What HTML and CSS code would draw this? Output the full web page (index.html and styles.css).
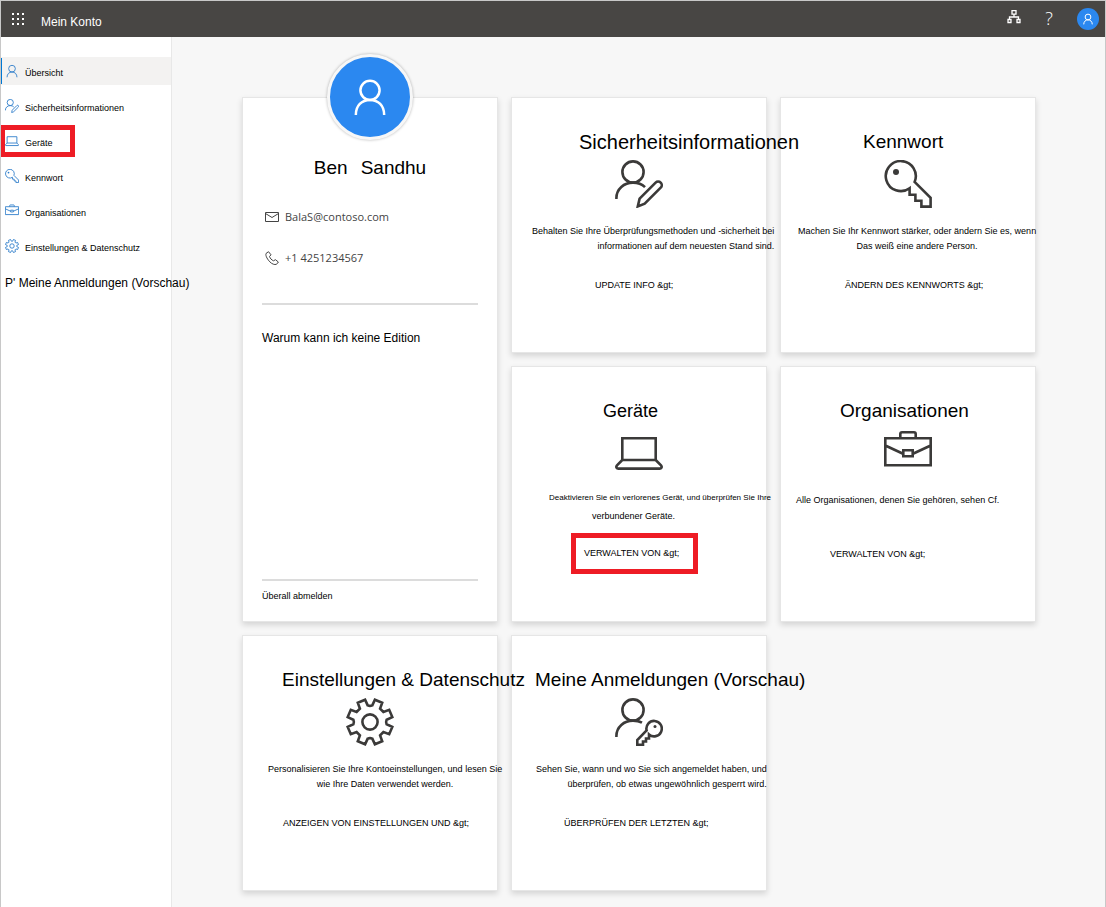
FILE: index.html
```html
<!DOCTYPE html>
<html lang="de">
<head>
<meta charset="utf-8">
<meta name="viewport" content="width=device-width, initial-scale=1">
<title>Mein Konto</title>
<link rel="stylesheet" href="styles.css">
</head>
<body class="page">
<svg class="sprite" aria-hidden="true">
  <symbol id="person" viewBox="0 0 48 48"><circle cx="24" cy="16" r="11.500"/><path d="M7 45.500c0-11 7-18 17-18s17 7 17 18"/></symbol>
  <symbol id="person-edit" viewBox="0 0 48 48"><circle cx="18" cy="12" r="10.6"/><path d="M1.4 39v-1C1.4 29 9 22.6 18 22.6c5 0 9 1.600 12 4.600M22.800 46.400l1.800-7.800 16-16a3.600 3.600 0 0 1 5.100 5.100l-16 16z"/></symbol>
  <symbol id="key" viewBox="0 0 48 48"><path d="M30.600 21.900l16 16v8.700h-9.200v-5.800h-6v-6h-5.800v-6.600A15 15 0 1 1 30.600 21.900z"/><circle class="dot" cx="12" cy="12" r="3"/></symbol>
  <symbol id="laptop" viewBox="0 0 48 48"><path d="M7.300 31V9.300h33.400V31zL2 36.300c-1.400 1.700-.4 3.300 1.400 3.300h41.200c1.800 0 2.800-1.600 1.400-3.300L40.700 31"/></symbol>
  <symbol id="briefcase" viewBox="0 0 48 48"><path d="M1.300 9.300h45.400v27H1.300zM16.300 9V5q0-1.700 1.700-1.700h12q1.700 0 1.700 1.700v4M1.300 16.500L18.500 24.500M46.700 16.500L29.500 24.500M19.300 21.300h9.400v6h-9.400z"/></symbol>
  <symbol id="gear" viewBox="0 0 48 48"><path d="M26.300 7.400L28.900 1.700 36.200 4.800 34.100 10.600 37.400 13.900 43.200 11.800 46.300 19.100 40.600 21.700Q39.600 24 40.600 26.300L46.300 28.900 43.200 36.200 37.400 34.100 34.100 37.400 36.200 43.200 28.900 46.300 26.300 40.600Q24 39.600 21.700 40.600L19.100 46.300 11.800 43.200 13.900 37.400 10.600 34.100 4.800 36.200 1.700 28.900 7.400 26.300Q8.400 24 7.400 21.700L1.700 19.100 4.800 11.800 10.600 13.900 13.900 10.600 11.800 4.800 19.100 1.700 21.700 7.400Q24 8.400 26.300 7.400z"/><circle cx="24" cy="24" r="7.600"/></symbol>
  <symbol id="person-key" viewBox="0 0 48 48"><circle cx="18" cy="12" r="10.6"/><path d="M1.400 39v-1C1.400 29 9 22.600 18 22.600c3.600 0 6.500.7 9 2.100M31.600 32.400l-9.300 9.700v4.600H28v-3.200h3v-3h3v-4.100a7.700 7.700 0 1 0-2.400-4z"/><circle class="dot" cx="40" cy="28.500" r="1.500"/></symbol>
  <symbol id="mail" viewBox="0 0 14 14"><path d="M.5 2.500h13v9H.5zM.5 3.500L7 7.500l6.500-4"/></symbol>
  <symbol id="phone" viewBox="0 0 14 14"><path d="M3.500.7L1 2.500C.2 5 3 9 5 11s4.500 3 6.500 2.300L13.400 11l-3-2.300-1.900 1.100C6.500 9 5.200 7.400 4.500 5.500L6 3.800z"/></symbol>
  <symbol id="org" viewBox="0 0 14 14"><path d="M5 .7h4v3.500H5zM1 9.500h3v3H1zM10 9.500h3v3h-3zM7 4v3M2.500 9.500V7h9v2.500"/></symbol>
  <symbol id="waffle" viewBox="0 0 12 12"><path d="M0 1h2M5 1h2M10 1h2M0 6h2M5 6h2M10 6h2M0 11h2M5 11h2M10 11h2"/></symbol>
</svg>

<header class="topbar">
  <button class="topbar-button" aria-label="App-Startfeld"><svg class="icon-waffle"><use href="#waffle"/></svg></button>
  <span class="brand">Mein Konto</span>
  <div class="topbar-actions">
    <button class="topbar-button" aria-label="Organisation"><svg class="icon-org"><use href="#org"/></svg></button>
    <button class="topbar-button help" aria-label="Hilfe">?</button>
    <button class="topbar-button account" aria-label="Konto"><svg class="icon-account"><use href="#person"/></svg></button>
  </div>
</header>

<div class="layout">
  <nav class="sidebar">
    <a class="nav-item active" href="#"><svg class="icon-nav"><use href="#person"/></svg><span class="nav-label">Übersicht</span></a>
    <a class="nav-item" href="#"><svg class="icon-nav"><use href="#person-edit"/></svg><span class="nav-label">Sicherheitsinformationen</span></a>
    <a class="nav-item marked" href="#"><svg class="icon-nav"><use href="#laptop"/></svg><span class="nav-label">Geräte</span></a>
    <a class="nav-item" href="#"><svg class="icon-nav"><use href="#key"/></svg><span class="nav-label">Kennwort</span></a>
    <a class="nav-item" href="#"><svg class="icon-nav"><use href="#briefcase"/></svg><span class="nav-label">Organisationen</span></a>
    <a class="nav-item" href="#"><svg class="icon-nav"><use href="#gear"/></svg><span class="nav-label">Einstellungen &amp; Datenschutz</span></a>
    <a class="nav-item large" href="#"><span class="nav-label">P' Meine Anmeldungen (Vorschau)</span></a>
  </nav>

  <main class="cards">
    <section class="card profile">
      <div class="avatar"><svg class="icon-avatar"><use href="#person"/></svg></div>
      <h1 class="name"><span>Ben</span><span>Sandhu</span></h1>
      <p class="contact"><svg class="icon-small"><use href="#mail"/></svg>BalaS@contoso.com</p>
      <p class="contact"><svg class="icon-small"><use href="#phone"/></svg>+1 4251234567</p>
      <div class="profile-note"><a class="link" href="#">Warum kann ich keine Edition</a></div>
      <div class="profile-footer"><a class="link" href="#">Überall abmelden</a></div>
    </section>

    <section class="card security">
      <h2 class="title">Sicherheitsinformationen</h2>
      <svg class="icon-card"><use href="#person-edit"/></svg>
      <p class="text">Behalten Sie Ihre Überprüfungsmethoden und -sicherheit bei<br>informationen auf dem neuesten Stand sind.</p>
      <a class="action" href="#">UPDATE INFO &amp;gt;</a>
    </section>

    <section class="card password">
      <h2 class="title">Kennwort</h2>
      <svg class="icon-card"><use href="#key"/></svg>
      <p class="text">Machen Sie Ihr Kennwort stärker, oder ändern Sie es, wenn<br>Das weiß eine andere Person.</p>
      <a class="action" href="#">ÄNDERN DES KENNWORTS &amp;gt;</a>
    </section>

    <section class="card devices">
      <h2 class="title">Geräte</h2>
      <svg class="icon-card"><use href="#laptop"/></svg>
      <p class="text"><span class="spread">Deaktivieren Sie ein verlorenes Gerät, und überprüfen Sie Ihre</span><span class="second">verbundener Geräte.</span></p>
      <a class="action" href="#">VERWALTEN VON &amp;gt;</a>
    </section>

    <section class="card organisations">
      <h2 class="title">Organisationen</h2>
      <svg class="icon-card"><use href="#briefcase"/></svg>
      <p class="text">Alle Organisationen, denen Sie gehören, sehen Cf.</p>
      <a class="action" href="#">VERWALTEN VON &amp;gt;</a>
    </section>

    <section class="card settings">
      <h2 class="title">Einstellungen &amp; Datenschutz</h2>
      <svg class="icon-card"><use href="#gear"/></svg>
      <p class="text">Personalisieren Sie Ihre Kontoeinstellungen, und lesen Sie<br>wie Ihre Daten verwendet werden.</p>
      <a class="action" href="#">ANZEIGEN VON EINSTELLUNGEN UND &amp;gt;</a>
    </section>

    <section class="card signins">
      <h2 class="title">Meine Anmeldungen (Vorschau)</h2>
      <svg class="icon-card"><use href="#person-key"/></svg>
      <p class="text">Sehen Sie, wann und wo Sie sich angemeldet haben, und<br>überprüfen, ob etwas ungewöhnlich gesperrt wird.</p>
      <a class="action" href="#">ÜBERPRÜFEN DER LETZTEN &amp;gt;</a>
    </section>
  </main>
</div>
</body>
</html>
```
FILE: styles.css
```css
*, *::before, *::after { box-sizing: border-box; }

.page {
  margin: 0;
  min-height: 100vh;
  display: flex;
  flex-direction: column;
  border: 1px solid #c8c8c8;
  background: #f7f7f7;
  color: #000;
  font: 9px/14px "Liberation Sans", Arial, sans-serif;
}

svg {
  display: block;
  flex: none;
  fill: none;
  stroke: currentColor;
}
.sprite { position: absolute; width: 0; height: 0; }
.dot { fill: currentColor; stroke: none; }
a { color: inherit; text-decoration: none; }
h1, h2, p { margin: 0; font-weight: 400; }

.icon-waffle { width: 12px; height: 12px; stroke-width: 2px; }
.icon-small { width: 14px; height: 14px; stroke-width: 1px; }
.icon-org { width: 14px; height: 14px; margin-bottom: 4px; stroke-width: 1.3px; }
.icon-nav { width: 14px; height: 14px; stroke-width: 3px; color: #2b7cc9; }
.icon-account { width: 12px; height: 12px; stroke-width: 4px; }
.icon-avatar { width: 40px; height: 40px; stroke-width: 3px; }
.icon-card { width: 48px; height: 48px; margin: 6px auto 16px; stroke-width: 2.6px; color: #3b3a39; }

.topbar {
  height: 36px;
  display: flex;
  align-items: center;
  padding: 0 6px 0 11px;
  background: #484644;
  color: #fff;
}
.topbar-button {
  display: grid;
  place-items: center;
  padding: 0;
  border: 0;
  background: none;
  color: inherit;
}
.brand { margin: 5px 0 0 17px; font-size: 12px; }
.topbar-actions { margin-left: auto; display: flex; align-items: center; gap: 17px; }
.help { width: 22px; padding-bottom: 3px; font: 300 18px/22px "Open Sans", sans-serif; }
.account { width: 22px; height: 22px; border-radius: 50%; background: #2b88f0; }

.layout { flex: 1; display: flex; }
.sidebar {
  position: relative;
  z-index: 2;
  flex: 0 0 171px;
  min-width: 0;
  display: flex;
  flex-direction: column;
  gap: 7px;
  padding-top: 20px;
  border-right: 1px solid #e8e8e8;
  background: #fff;
}
.nav-item {
  position: relative;
  height: 28px;
  display: flex;
  align-items: center;
  gap: 6px;
  padding-left: 4px;
  white-space: nowrap;
}
.nav-label { padding-top: 3px; }
.active { background: #f3f2f1; }
.active::before {
  content: "";
  position: absolute;
  inset: 1px auto 1px 0;
  width: 1px;
  background: #0078d4;
}
.marked::after {
  content: "";
  position: absolute;
  inset: -2px auto -2px -1px;
  width: 75px;
  border: 5px solid #ee1c25;
}
.large { font-size: 12px; }

.cards {
  flex: 1;
  min-width: 0;
  display: grid;
  grid-template-columns: repeat(3, 1fr);
  grid-auto-rows: minmax(256px, max-content);
  gap: 13px;
  padding: 60px 69px 16px 70px;
}
.card {
  min-width: 0;
  padding-top: 32px;
  border: 1px solid #e6e6e6;
  background: #fff;
  box-shadow: 0 3px 6px rgba(0, 0, 0, .14);
  white-space: nowrap;
}
.title, .text, .action {
  position: relative;
  z-index: 1;
  width: max-content;
}
.title { font-size: 19px; line-height: 24px; }
.text { min-height: 30px; line-height: 15px; }
.action { display: block; margin-top: 24px; }

.security .title { margin-left: 67px; font-size: 20px; }
.security .text { margin-left: 20px; text-align: right; }
.security .action { margin-left: 83px; }

.password .title { margin-left: 82px; }
.password .text { margin-left: 17px; text-align: center; }
.password .action { margin-left: 64px; }

.devices .title { margin-left: 91px; font-size: 18px; }
.devices .icon-card { margin-bottom: 12px; }
.devices .text { width: 222px; margin-left: 37px; line-height: 18px; }
.devices .action {
  margin: 8px 0 0 59px;
  padding: 9px 14px 9px 8px;
  border: 5px solid #ee1c25;
  line-height: 13px;
}
.spread { display: block; font-size: 8px; text-align-last: justify; }
.second { display: block; padding-left: 43px; }

.organisations .title { margin-left: 59px; }
.organisations .text { margin-left: 15px; }
.organisations .action { margin-left: 49px; }

.settings .title { margin-left: 39px; }
.settings .text { margin-left: 25px; text-align: center; }
.settings .action { margin-left: 40px; }

.signins .title { margin-left: 23px; }
.signins .text { margin-left: 24px; text-align: right; }
.signins .action { margin-left: 52px; }

.profile {
  position: relative;
  grid-row: span 2;
  display: flex;
  flex-direction: column;
  padding: 58px 19px 18px;
}
.avatar {
  position: absolute;
  top: -44px;
  left: 50%;
  width: 86px;
  height: 86px;
  margin-left: -43px;
  display: grid;
  place-items: center;
  border: 3px solid #f7f7f7;
  border-radius: 50%;
  background: #2b88f0;
  box-shadow: 0 0 3px rgba(0, 0, 0, .3);
  color: #fff;
}
.name {
  display: flex;
  justify-content: center;
  gap: 13px;
  margin-bottom: 29px;
  font-size: 19px;
  line-height: 24px;
}
.contact {
  display: flex;
  align-items: center;
  gap: 6px;
  margin-bottom: 25px;
  padding-left: 3px;
  color: #444;
  font: 11px/16px "Open Sans", sans-serif;
}
.profile-note {
  margin-top: 12px;
  padding-top: 26px;
  border-top: 2px solid #dcdcdc;
  font-size: 12px;
}
.profile-footer {
  margin-top: auto;
  padding-top: 8px;
  border-top: 2px solid #dcdcdc;
}
```
